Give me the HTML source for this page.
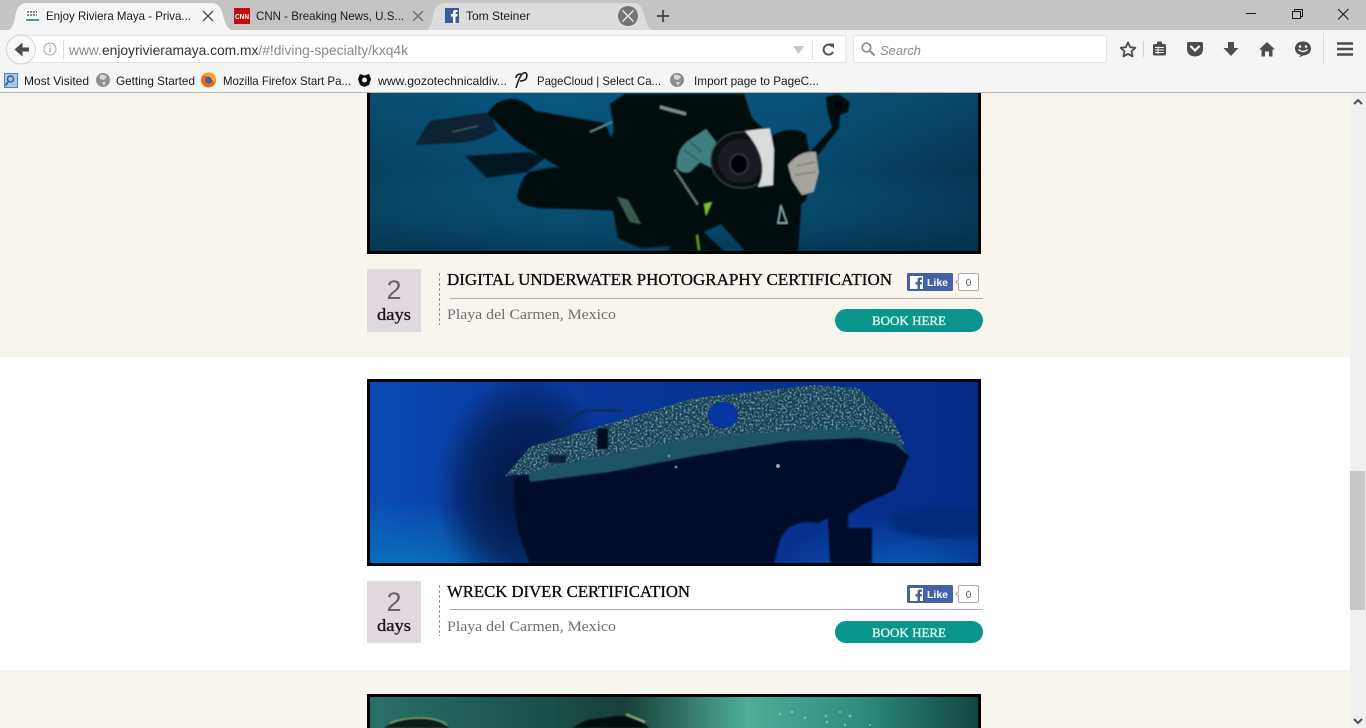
<!DOCTYPE html>
<html><head><meta charset="utf-8"><title>Enjoy Riviera Maya</title>
<style>
html,body{margin:0;padding:0;width:1366px;height:728px;overflow:hidden;background:#fff}
svg{display:block;position:absolute;left:0;top:0}
.ui{font-family:"Liberation Sans",sans-serif;font-size:12px;fill:#1a1a1a}
.ti{font-family:"Liberation Serif",serif;font-size:17px;fill:#0a0a0a;stroke:#0a0a0a;stroke-width:.3px}
.lo{font-family:"Liberation Serif",serif;font-size:15px;fill:#756b71}
.da{font-family:"Liberation Serif",serif;font-size:17px;fill:#1c1418;stroke:#1c1418;stroke-width:.35px}
.nu{font-family:"Liberation Sans",sans-serif;font-size:27px;fill:#6d6170}
.bk{font-family:"Liberation Serif",serif;font-size:12.5px;fill:#eafffb;stroke:#eafffb;stroke-width:.25px}
.lk{font-family:"Liberation Sans",sans-serif;font-size:10.5px;font-weight:bold;fill:#fff}
.ct{font-family:"Liberation Sans",sans-serif;font-size:10px;fill:#555}
</style></head><body>
<svg width="1366" height="728" viewBox="0 0 1366 728" xmlns="http://www.w3.org/2000/svg">
<defs>
<linearGradient id="d1" x1="0" y1="0" x2="1" y2="0"><stop offset="0" stop-color="#06405f"/><stop offset=".3" stop-color="#084d72"/><stop offset=".7" stop-color="#07486c"/><stop offset="1" stop-color="#053650"/></linearGradient>
<linearGradient id="d2" x1="0" y1="0" x2="0" y2="1"><stop offset="0" stop-color="#0c6c9c" stop-opacity=".3"/><stop offset=".5" stop-color="#0c6c9c" stop-opacity="0"/><stop offset="1" stop-color="#02283c" stop-opacity=".45"/></linearGradient>
<linearGradient id="s1" x1="0" y1="0" x2="1" y2="0"><stop offset="0" stop-color="#0a4cb4"/><stop offset=".25" stop-color="#07399c"/><stop offset=".7" stop-color="#06328f"/><stop offset="1" stop-color="#062c88"/></linearGradient>
<radialGradient id="s2" cx=".5" cy=".5" r=".5"><stop offset="0" stop-color="#0b82c6" stop-opacity=".95"/><stop offset=".6" stop-color="#0a6cb8" stop-opacity=".6"/><stop offset="1" stop-color="#0a6cb8" stop-opacity="0"/></radialGradient>
<radialGradient id="s4" cx=".5" cy=".5" r=".5"><stop offset="0" stop-color="#03163e" stop-opacity="1"/><stop offset=".6" stop-color="#041c4e" stop-opacity=".75"/><stop offset="1" stop-color="#041c4e" stop-opacity="0"/></radialGradient>
<radialGradient id="s5" cx=".5" cy=".5" r=".5"><stop offset="0" stop-color="#0a60bc" stop-opacity=".95"/><stop offset="1" stop-color="#0a60bc" stop-opacity="0"/></radialGradient>
<linearGradient id="c1" x1="0" y1="0" x2="1" y2="0"><stop offset="0" stop-color="#2a6f68"/><stop offset=".2" stop-color="#1c5a52"/><stop offset=".42" stop-color="#173f38"/><stop offset=".62" stop-color="#4fae96"/><stop offset=".8" stop-color="#2f8f7e"/><stop offset="1" stop-color="#12463e"/></linearGradient>
<filter id="b2" x="-20%" y="-20%" width="140%" height="140%"><feGaussianBlur stdDeviation="3"/></filter>
<filter id="b1" x="-5%" y="-5%" width="110%" height="110%"><feGaussianBlur stdDeviation=".8"/></filter>
<filter id="nz" x="0" y="0" width="100%" height="100%"><feTurbulence type="fractalNoise" baseFrequency=".5" numOctaves="2" seed="4" result="n"/><feColorMatrix in="n" type="matrix" values="0 0 0 0 .22  0 0 0 0 .44  0 0 0 0 .5  0 0 0 2.5 -1.2"/><feComposite in2="SourceGraphic" operator="in" result="t"/><feMerge><feMergeNode in="SourceGraphic"/><feMergeNode in="t"/></feMerge></filter>
<clipPath id="cpa"><rect x="370" y="93" width="608" height="158"/></clipPath>
<clipPath id="cpb"><rect x="370" y="382" width="608" height="181"/></clipPath>
<clipPath id="cpc"><rect x="370" y="697" width="608" height="31"/></clipPath>
</defs>

<!-- page backgrounds -->
<rect x="0" y="93" width="1350" height="264" fill="#f8f4ee"/>
<rect x="0" y="357" width="1350" height="313" fill="#fff"/>
<rect x="0" y="670" width="1350" height="58" fill="#f8f4ee"/>

<!-- image 1 : diver -->
<rect x="367" y="93" width="614" height="161" fill="#000"/>
<g clip-path="url(#cpa)">
<rect x="370" y="93" width="608" height="158" fill="url(#d1)"/>
<rect x="370" y="93" width="608" height="158" fill="url(#d2)"/>
<g filter="url(#b1)">
<path d="M415,145 L430,121 L490,112 L497,130 Q480,142 455,143 Z" fill="#0a2230"/>
<path d="M465,156 L530,152 L545,158 L527,172 L487,178 Z" fill="#061520"/>
<g fill="#03080d">
<path d="M488,114 Q494,100 512,99 Q525,100 535,111 L605,123 L625,170 L600,165 L560,168 Q530,150 515,140 Z"/>
<path d="M517,197 Q520,180 529,172 L548,168 L602,165 L645,170 L650,212 L600,210 L540,208 Q520,206 517,197Z"/>
<path d="M610,104 L625,94 L744,94 L752,118 L770,135 L802,195 L798,251 L745,251 L721,224 L672,246 L640,248 L618,238 L612,205 L600,170 L614,130Z"/>
<path d="M768,138 Q790,124 806,134 L812,170 L806,200 L790,215 L768,200Z"/>
<path d="M812,150 L832,128 L827,108 L826,97 L838,94 L850,102 L848,112 L840,115 L839,128 L818,155 L806,170 L800,160Z"/>
<path d="M668,251 L676,235 L700,228 L712,240 L724,251Z"/>
</g>
<path d="M677,168 Q676,150 688,141 L706,129 L716,142 L718,152 L712,168 L700,162 L690,172 Q682,174 677,168Z" fill="#3f7f80"/>
<path d="M690,142 L702,152 M684,150 L698,160" stroke="#23585c" stroke-width="1.200"/>
<path d="M788,165 Q800,150 816,152 L819,172 L814,192 L802,195 L792,180Z" fill="#a5a49d"/>
<path d="M797,166 L815,162 M795,175 L816,172" stroke="#6a6a64" stroke-width="1"/>
<ellipse cx="742" cy="160" rx="31" ry="28" fill="#0a0d10" stroke="#2c3a40" stroke-width="1.500"/>
<ellipse cx="741" cy="161" rx="23" ry="22" fill="#161e24"/>
<ellipse cx="739" cy="164" rx="9" ry="10" fill="#050608" stroke="#38444a"/>
<path d="M745,131 L770,128 L774,150 L773,185 L758,187 Q771,160 745,131Z" fill="#d8dcda"/>
<path d="M617,197 L628,200 L641,224 L630,222Z" fill="#3a5a50"/>
<path d="M704,204 L712,202 L706,216Z" fill="#7cc234"/>
<path d="M697,235 L699,250" stroke="#5aa02c" stroke-width="2"/>
<path d="M675,170 L698,205" stroke="#7c9aa0" stroke-width="2" stroke-dasharray="2 1"/>
<path d="M781,206 L787,223 L778,223Z" fill="none" stroke="#9fd0d0" stroke-width="1"/>
<path d="M660,107 L686,114" stroke="#7f9097" stroke-width="3"/>
<path d="M590,132 L612,122" stroke="#6d98a0" stroke-width="1.500"/>
<path d="M452,132 L478,126" stroke="#49606c" stroke-width="1"/>
<circle cx="838" cy="105" r="4" fill="#02060a"/>
</g>
</g>
<rect x="368.500" y="91" width="611" height="161.500" fill="none" stroke="#000" stroke-width="3"/>

<!-- row 1 -->
<rect x="367" y="269" width="54" height="63" fill="#e0d9de"/>
<text class="nu" x="394" y="299" text-anchor="middle">2</text>
<text class="da" x="377" y="320" textLength="34" lengthAdjust="spacingAndGlyphs">days</text>
<line x1="439.500" y1="273" x2="439.500" y2="325" stroke="#9a9297" stroke-dasharray="3 2"/>
<text class="ti" x="447" y="285" textLength="445" lengthAdjust="spacingAndGlyphs">DIGITAL UNDERWATER PHOTOGRAPHY CERTIFICATION</text>
<line x1="450" y1="298.500" x2="983" y2="298.500" stroke="#b5adaa"/>
<text class="lo" x="447" y="319" textLength="169" lengthAdjust="spacingAndGlyphs">Playa del Carmen, Mexico</text>
<rect x="907" y="273" width="46" height="18" rx="1.500" fill="#4460a6"/>
<rect x="910" y="276" width="13" height="13" fill="#fff"/>
<path d="M917.500,291 V284.500 H915.500 V282 H917.500 V280 Q917.500,277.500 920,277.500 H922 V279.700 H920.800 Q920,279.700 920,280.500 V282 H922 L921.700,284.500 H920 V291Z" fill="#4460a6"/>
<text class="lk" x="927" y="286" textLength="21" lengthAdjust="spacingAndGlyphs">Like</text>
<rect x="958.500" y="273.500" width="20" height="17" rx="1.500" fill="#fff" stroke="#a8a8a8"/>
<path d="M958.500,280 L956,282 L958.500,284" fill="#fff" stroke="#a8a8a8"/>
<text class="ct" x="968.500" y="286" text-anchor="middle">0</text>
<rect x="835" y="309" width="148" height="23" rx="11.500" fill="#0a958c"/>
<text class="bk" x="872" y="325" textLength="74" lengthAdjust="spacingAndGlyphs">BOOK HERE</text>

<!-- image 2 : wreck -->
<rect x="367" y="379" width="614" height="187" fill="#02040a"/>
<g clip-path="url(#cpb)">
<rect x="370" y="382" width="608" height="181" fill="url(#s1)"/>
<ellipse cx="400" cy="585" rx="170" ry="85" fill="url(#s2)"/>
<ellipse cx="905" cy="575" rx="130" ry="60" fill="url(#s5)"/>
<ellipse cx="525" cy="490" rx="90" ry="115" fill="url(#s4)"/>
<ellipse cx="945" cy="523" rx="55" ry="15" fill="#052a7c" filter="url(#b2)"/>
<path d="M530,563 Q510,520 515,478 L610,458 L700,440 L790,434 L860,432 L895,436 L909,456 L895,490 L862,505 L848,515 L848,528 L872,528 L872,563 L830,563 L828,518 L818,523 Q790,518 780,540 L774,563Z" fill="#03112c" filter="url(#b1)"/>
<path d="M505,476 L530,447 L617,421 L694,398 L814,385 L858,388 L892,418 L905,445 L860,435 L790,436 L700,450 L610,468 L530,474 Z" fill="#173f58" filter="url(#nz)"/>
<path d="M528,472 L610,454 L700,437 L790,431 L860,429 L895,435 L909,456 L895,444 L860,438 L790,441 L700,455 L610,472 L530,482Z" fill="#1e5266" filter="url(#b1)"/>
<ellipse cx="723" cy="415" rx="15" ry="13" fill="#0536a0"/>
<path d="M560,430 Q575,412 590,410 L622,411" fill="none" stroke="#0c2a4a" stroke-width="2" filter="url(#b1)"/>
<rect x="597" y="428" width="11" height="21" fill="#040f20" filter="url(#b1)"/>
<rect x="548" y="455" width="18" height="8" fill="#0c2238" filter="url(#b1)"/>
<circle cx="778" cy="466" r="2" fill="#88a8b8"/>
<circle cx="669" cy="456" r="1.500" fill="#6888a0"/>
<circle cx="676" cy="467" r="1.500" fill="#6888a0"/>
</g>
<rect x="368.500" y="380.500" width="611" height="184" fill="none" stroke="#02040a" stroke-width="3"/>

<!-- row 2 -->
<rect x="367" y="581" width="54" height="62" fill="#e0d9de"/>
<text class="nu" x="394" y="611" text-anchor="middle">2</text>
<text class="da" x="377" y="631" textLength="34" lengthAdjust="spacingAndGlyphs">days</text>
<line x1="439.500" y1="585" x2="439.500" y2="636" stroke="#9a9297" stroke-dasharray="3 2"/>
<text class="ti" x="447" y="597" textLength="243" lengthAdjust="spacingAndGlyphs">WRECK DIVER CERTIFICATION</text>
<line x1="450" y1="609.500" x2="983" y2="609.500" stroke="#b5adaa"/>
<text class="lo" x="447" y="631" textLength="169" lengthAdjust="spacingAndGlyphs">Playa del Carmen, Mexico</text>
<rect x="907" y="585" width="46" height="18" rx="1.500" fill="#4460a6"/>
<rect x="910" y="588" width="13" height="13" fill="#fff"/>
<path d="M917.500,603 V596.500 H915.500 V594 H917.500 V592 Q917.500,589.500 920,589.500 H922 V591.700 H920.800 Q920,591.700 920,592.500 V594 H922 L921.700,596.500 H920 V603Z" fill="#4460a6"/>
<text class="lk" x="927" y="598" textLength="21" lengthAdjust="spacingAndGlyphs">Like</text>
<rect x="958.500" y="585.500" width="20" height="17" rx="1.500" fill="#fff" stroke="#a8a8a8"/>
<path d="M958.500,592 L956,594 L958.500,596" fill="#fff" stroke="#a8a8a8"/>
<text class="ct" x="968.500" y="598" text-anchor="middle">0</text>
<rect x="835" y="621" width="148" height="22" rx="11" fill="#0a958c"/>
<text class="bk" x="872" y="637" textLength="74" lengthAdjust="spacingAndGlyphs">BOOK HERE</text>

<!-- image 3 : cenote -->
<rect x="367" y="694" width="614" height="34" fill="#000"/>
<g clip-path="url(#cpc)">
<rect x="370" y="697" width="608" height="31" fill="url(#c1)"/>
<g filter="url(#b1)">
<path d="M384,728 Q398,718 420,718 Q440,719 449,728Z" fill="#0c1c14"/>
<path d="M390,723 Q405,717 425,718 Q440,719 447,725" fill="none" stroke="#9cb070" stroke-width="1"/>
<path d="M573,728 Q585,718 605,718 Q618,714 630,718 Q642,720 649,728Z" fill="#060a08"/>
<path d="M626,714 L645,722" stroke="#b0cc88" stroke-width="1.500"/>
</g>
<g fill="#a8e6c8" opacity=".6"><circle cx="780" cy="714" r="1.200"/><circle cx="792" cy="712" r="1.200"/><circle cx="805" cy="718" r="1.200"/><circle cx="826" cy="716" r="1.200"/><circle cx="840" cy="712" r="1"/><circle cx="827" cy="722" r="1.200"/><circle cx="850" cy="716" r="1.500"/><circle cx="845" cy="725" r="1.200"/><circle cx="870" cy="725" r="1"/></g>
</g>
<rect x="368.500" y="695.500" width="611" height="40" fill="none" stroke="#000" stroke-width="3"/>

<!-- scrollbar -->
<rect x="1350" y="93" width="16" height="635" fill="#f0f0f0"/>
<rect x="1350" y="471" width="15" height="139" fill="#c7c7c7"/>
<path d="M1354,104 L1358,100 L1362,104" fill="none" stroke="#505050" stroke-width="2"/>
<path d="M1354,719 L1358,723 L1362,719" fill="none" stroke="#505050" stroke-width="2"/>

<!-- browser: title bar -->
<rect x="0" y="0" width="1366" height="31" fill="#c4c4c4"/>
<path d="M426,30 Q431,29 433,16 Q435,3 445,3 H634 Q641,3 644,14 Q647,28 652,30Z" fill="#dcdcdc"/>
<path d="M8,30 Q13,29 15,17 Q17,3 27,3 H212 Q220,3 223,15 Q226,29 232,30Z" fill="#f5f5f5"/>
<!-- nav + bookmarks -->
<rect x="0" y="30" width="1366" height="62" fill="#f5f5f5"/>
<rect x="0" y="92" width="1366" height="1" fill="#b8b8b8"/>

<!-- tab 1 -->
<rect x="25" y="9" width="14" height="13" fill="#fff"/>
<path d="M26,20 H39" stroke="#2ea5a0" stroke-width="2"/>
<path d="M27,12 H37 M27,15 H37" stroke="#56616e" stroke-width="1.500" stroke-dasharray="2 1"/>
<text class="ui" x="46" y="20" textLength="145" lengthAdjust="spacingAndGlyphs">Enjoy Riviera Maya - Priva...</text>
<path d="M203,11 L213,21 M213,11 L203,21" stroke="#4a4a4a" stroke-width="1.300"/>
<!-- tab 2 -->
<rect x="234" y="8" width="16" height="16" fill="#c40a0a"/>
<text x="242" y="19" text-anchor="middle" textLength="14" lengthAdjust="spacingAndGlyphs" style="font:bold 7px 'Liberation Sans',sans-serif;fill:#fff">CNN</text>
<text class="ui" x="256" y="20" textLength="148" lengthAdjust="spacingAndGlyphs">CNN - Breaking News, U.S...</text>
<path d="M413,11 L423,21 M423,11 L413,21" stroke="#6a6a6a" stroke-width="1.300"/>
<!-- tab 3 -->
<rect x="445" y="8" width="14" height="15" fill="#3d5a9c"/>
<path d="M453,23 V16.500 H451 V14 H453 V12.500 Q453,10 455.500,10 H457.500 V12 H456.300 Q455.500,12 455.500,13 V14 H457.500 L457.200,16.500 H455.500 V23Z" fill="#fff"/>
<text class="ui" x="466" y="20" textLength="64" lengthAdjust="spacingAndGlyphs">Tom Steiner</text>
<circle cx="628" cy="16" r="10" fill="#747474"/>
<path d="M622.500,10.500 L633.500,21.500 M633.500,10.500 L622.500,21.500" stroke="#e6e6e6" stroke-width="1.500"/>
<path d="M657,16 H669 M663,10 V22" stroke="#4e4e4e" stroke-width="2"/>
<!-- window controls -->
<path d="M1246,13.500 H1256" stroke="#1a1a1a" stroke-width="1"/>
<rect x="1292.500" y="11.500" width="8" height="7" fill="none" stroke="#1a1a1a"/>
<path d="M1294.500,11 V9.500 H1302.500 V16.500 H1300.500" fill="none" stroke="#1a1a1a"/>
<path d="M1338,9 L1348.500,19.500 M1348.500,9 L1338,19.500" stroke="#1a1a1a" stroke-width="1.100"/>

<!-- url bar -->
<rect x="20" y="35.500" width="826" height="27" rx="1.500" fill="#fff" stroke="#e2e2e2"/>
<circle cx="21" cy="49.500" r="14.500" fill="#f8f8f8" stroke="#d4d4d4"/>
<path d="M29,47.500 H22.500 V42.500 L14.500,49.500 L22.500,56.500 V51.500 H29Z" fill="#4d4d4d"/>
<circle cx="50" cy="49" r="6" fill="none" stroke="#a8a8a8"/>
<path d="M50,47.500 V52.500 M50,45 V46.300" stroke="#a0a0a0" stroke-width="1.300"/>
<line x1="63.500" y1="40" x2="63.500" y2="59" stroke="#dedede"/>
<text x="69" y="55" style="font:14px 'Liberation Sans',sans-serif;fill:#8a8a8a" textLength="339" lengthAdjust="spacingAndGlyphs">www.<tspan fill="#333">enjoyrivieramaya.com.mx</tspan>/#!diving-specialty/kxq4k</text>
<path d="M793,46 H804 L798.500,54Z" fill="#c4c4c4"/>
<line x1="812.500" y1="40" x2="812.500" y2="60" stroke="#e2e2e2"/>
<path d="M832.500,46.500 A5,5 0 1 0 833,52" fill="none" stroke="#555" stroke-width="2"/>
<path d="M829,43.500 L834,43.500 L834,48.500Z" fill="#555"/>
<!-- search -->
<rect x="853.500" y="35.500" width="253" height="27" rx="1.500" fill="#fff" stroke="#e2e2e2"/>
<circle cx="866.500" cy="47.500" r="4.300" fill="none" stroke="#8c8c8c" stroke-width="1.700"/>
<path d="M870,51 L874.500,55.500" stroke="#8c8c8c" stroke-width="2"/>
<text x="880" y="55" style="font:italic 13px 'Liberation Sans',sans-serif;fill:#8a8a8a" textLength="41" lengthAdjust="spacingAndGlyphs">Search</text>
<!-- toolbar icons -->
<path d="M1128,42.500 L1130.200,47.200 L1135.300,47.800 L1131.500,51.300 L1132.600,56.400 L1128,53.900 L1123.400,56.400 L1124.500,51.300 L1120.700,47.800 L1125.800,47.200Z" fill="none" stroke="#4d4d4d" stroke-width="1.800" stroke-linejoin="round"/>
<line x1="1143.500" y1="41" x2="1143.500" y2="57" stroke="#d4d4d4"/>
<rect x="1153" y="44" width="13" height="11.500" rx="1.500" fill="#4d4d4d"/>
<rect x="1157" y="41.500" width="5" height="4" rx="1" fill="#4d4d4d"/>
<path d="M1155,47.500 H1164 M1155,50 H1164 M1155,52.500 H1164 M1158,46.500 V54" stroke="#f5f5f5" stroke-width="1"/>
<path d="M1188.500,42 H1201.500 Q1203,42 1203,43.500 V49 Q1203,56 1195,56.500 Q1187,56 1187,49 V43.500 Q1187,42 1188.500,42Z" fill="#4d4d4d"/>
<path d="M1191,46.500 L1195,50.500 L1199,46.500" fill="none" stroke="#f5f5f5" stroke-width="2.200" stroke-linecap="round"/>
<path d="M1228,42 H1234 V48 H1238.500 L1231,56 L1223.500,48 H1228Z" fill="#4d4d4d"/>
<path d="M1267,42 L1275,49.500 H1272.500 V56.500 H1269 V51.500 H1265 V56.500 H1261.500 V49.500 H1259Z" fill="#4d4d4d"/>
<path d="M1303,41.500 C1298,41.500 1295,44.500 1295,48.500 C1295,52 1297.500,54.500 1301,55 L1298.500,57.500 L1304,55.300 C1308.500,55 1311,52 1311,48.500 C1311,44.500 1308,41.500 1303,41.500Z" fill="#4d4d4d"/>
<circle cx="1300" cy="46.500" r="1.300" fill="#f5f5f5"/><circle cx="1306" cy="46.500" r="1.300" fill="#f5f5f5"/>
<path d="M1298.500,49.500 Q1303,53.500 1307.500,49.500" fill="none" stroke="#f5f5f5" stroke-width="1.500"/>
<line x1="1323.500" y1="33" x2="1323.500" y2="64" stroke="#dcdcdc"/>
<path d="M1337,43.500 H1353 M1337,49 H1353 M1337,54.500 H1353" stroke="#4d4d4d" stroke-width="2.500"/>

<!-- bookmarks -->
<rect x="4.500" y="73.500" width="13" height="14" fill="#a9c6e4" stroke="#4f82b8"/>
<circle cx="10.500" cy="79" r="3" fill="none" stroke="#2d5f9a" stroke-width="1.500"/>
<path d="M8,82 L5.500,85.500" stroke="#2d5f9a" stroke-width="1.800"/>
<text class="ui" x="24" y="85" textLength="65" lengthAdjust="spacingAndGlyphs">Most Visited</text>
<circle cx="103" cy="80" r="7" fill="#8e8e8e"/>
<path d="M100,75 Q104,74 107,77 L104,80 L100,79Z M102,82 L106,82 L104,86Z" fill="#d8d8d8"/>
<text class="ui" x="116" y="85" textLength="79" lengthAdjust="spacingAndGlyphs">Getting Started</text>
<circle cx="208.500" cy="80" r="7.500" fill="#e66a1e"/>
<circle cx="209" cy="80" r="3.500" fill="#3a5f9e"/>
<path d="M203,75 Q208,71 214,74 Q217,78 215,83 L212,80 Q210,76 206,76Z" fill="#f4a22a"/>
<text class="ui" x="223" y="85" textLength="128" lengthAdjust="spacingAndGlyphs">Mozilla Firefox Start Pa...</text>
<path d="M360,74 L364.500,75.500 L369,74 L371,79 L369,85 L364.500,87 L360,85 L358,79Z" fill="#0c0c0c"/>
<circle cx="364.500" cy="80" r="2.500" fill="#f5f5f5"/>
<text class="ui" x="378" y="85" textLength="129" lengthAdjust="spacingAndGlyphs">www.gozotechnicaldiv...</text>
<path d="M516,88 Q519,78 522,74 Q526,71 527,75 Q527,81 520,81 M521,74 Q516,74 516,78" fill="none" stroke="#222" stroke-width="1.600"/>
<text class="ui" x="537" y="85" textLength="124" lengthAdjust="spacingAndGlyphs">PageCloud | Select Ca...</text>
<circle cx="677" cy="80" r="7" fill="#8e8e8e"/>
<path d="M674,75 Q678,74 681,77 L678,80 L674,79Z M676,82 L680,82 L678,86Z" fill="#d8d8d8"/>
<text class="ui" x="694" y="85" textLength="125" lengthAdjust="spacingAndGlyphs">Import page to PageC...</text>
</svg>
</body></html>
